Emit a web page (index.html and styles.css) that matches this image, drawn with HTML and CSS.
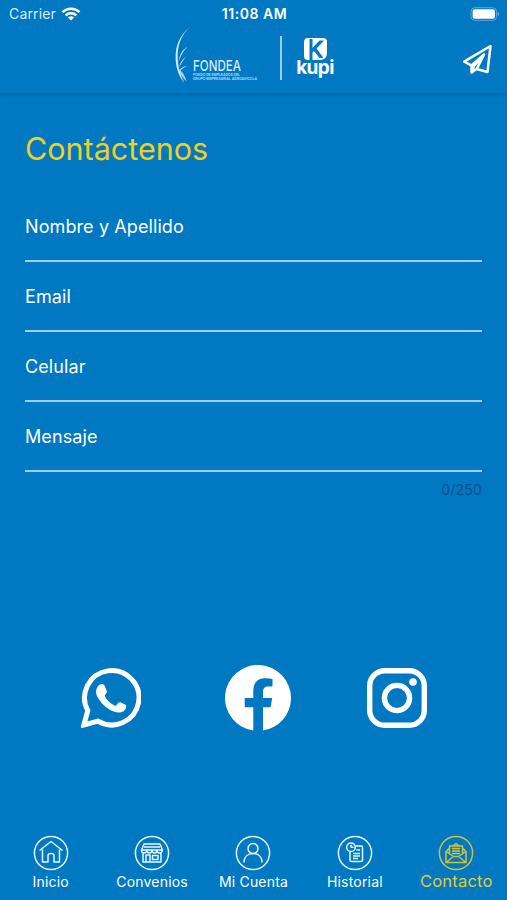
FILE: index.html
```html
<!DOCTYPE html>
<html lang="es">
<head>
  <meta charset="UTF-8">
  <meta name="viewport" content="width=device-width, initial-scale=1.0">
  <title>Contáctenos</title>
  <link rel="stylesheet" href="styles.css">
</head>
<body>
  <header>
    <div class="status-bar">
      <div class="carrier">
        <span>Carrier</span>
        <svg width="20" height="14" viewBox="0 0 20 14" fill="none" stroke="#fff" stroke-width="2.5">
          <path d="M1.5 5.1C6.3.5 13.7.5 18.500 5.100M4.700 8.400C7.700 5.600 12.300 5.600 15.300 8.400"/>
          <path d="M10 13.600L6.900 10.600Q10 8.100 13.100 10.600Z" fill="#fff" stroke="none"/>
        </svg>
      </div>
      <span class="time">11:08 AM</span>
      <svg class="battery" width="30" height="14" viewBox="0 0 30 14">
        <rect x="1" y=".7" width="25.500" height="12.600" rx="3.800" fill="none" stroke="#5fa9da"/>
        <rect x="2.600" y="2.300" width="22.300" height="9.400" rx="2.200" fill="#fff"/>
        <path d="M27.800 4.800Q30.200 7 27.800 9.200Z" fill="#7fbce0"/>
      </svg>
    </div>
    <div class="top-bar">
      <div class="brand">
        <svg class="feather" width="17" height="58" viewBox="0 0 17 58" fill="#d5eafa">
          <path d="M15.500.5C4 10 .5 20 .6 32C.8 42 4 51 9.500 57C5 48 3.200 41 2.700 33C2 20 6 9 15.500.5Z"/>
          <path d="M12.500 20.500C6.500 25 4.500 29 3.700 36C6 28.500 8.500 25 12.500 20.500Z"/>
          <path d="M11.500 30.500C7 33.500 5 37 4.300 41C6.500 36.500 8.500 33.500 11.500 30.500Z"/>
          <path d="M12 40C7.500 40.500 5 42.500 4 46C6.500 43 8.500 41.500 12 40Z"/>
          <path d="M3.500 43C7 45 10 49.500 11.500 55.500C8 52 5 48 3.500 43Z" opacity=".8"/>
        </svg>
        <svg class="fondea" width="66" height="36" viewBox="0 0 66 36">
          <text x="0" y="18.500" textLength="48" lengthAdjust="spacingAndGlyphs" class="fondea-name">FONDEA</text>
          <text x="0" y="23.600" textLength="47" lengthAdjust="spacingAndGlyphs" class="fondea-sub">FONDO DE EMPLEADOS DEL</text>
          <text x="0" y="28" textLength="64" lengthAdjust="spacingAndGlyphs" class="fondea-sub">GRUPO EMPRESARIAL AGROAVÍCOLA</text>
        </svg>
        <span class="divider"></span>
        <div class="kupi">
          <svg width="23" height="22" viewBox="0 0 23 22">
            <path fill="#fff" d="M4 0H19Q23 0 23 4V15Q23 22 16 22H4Q0 22 0 18V4Q0 0 4 0Z"/>
            <path fill="#0079c2" d="M5.500 1H8.500V10L15.500 2.500H20L12.500 10.500L19.500 20H15.500L10 13L8.500 14.500V22H5.500Z"/>
          </svg>
          <span class="kupi-name">kupi</span>
        </div>
      </div>
      <a href="#" class="send" aria-label="Enviar">
        <svg width="32" height="32" viewBox="0 0 32 32" fill="none" stroke="#fff" stroke-width="2.500" stroke-linejoin="round" stroke-linecap="round">
          <path d="M28.500 2L2.200 17.600L9.500 21.500V28.500L14.500 25L25.500 28Z"/>
          <path d="M9.500 21.500L22 10.500L15 24.500M22 10.500L12 22L10 28"/>
        </svg>
      </a>
    </div>
  </header>

  <main>
    <h1>Contáctenos</h1>
    <form>
      <label class="field"><span>Nombre y Apellido</span></label>
      <label class="field"><span>Email</span></label>
      <label class="field"><span>Celular</span></label>
      <label class="field"><span>Mensaje</span></label>
      <p class="counter">0/250</p>
    </form>

    <div class="social">
      <a href="#" aria-label="WhatsApp">
        <svg width="60" height="60" viewBox="0 0 60 60">
          <path d="M2.800 57L6.800 42.600A27.200 27.200 0 1 1 17 53.200Z" fill="none" stroke="#fff" stroke-width="5"/>
          <path fill="#fff" d="M17.500 17.800C19.500 15.200 22.500 15.300 23.600 17.800L25.700 22.800C26.500 25 23.700 26.700 23.800 28C26 32.500 29.500 35.800 34 37.700C35.800 37.700 37.200 33.700 39.200 34.200L44.500 36.800C46 37.800 45 41.500 42.500 43.200C38 46.200 32 43.500 28 41.200C22.500 38 18.500 33 16 28C14.500 24.500 14.800 20.500 17.500 17.800Z"/>
        </svg>
      </a>
      <a href="#" class="facebook" aria-label="Facebook">
        <svg width="66" height="66" viewBox="0 0 66 66">
          <path fill="#fff" d="M66 33A33 33 0 1 0 28.300 65.600V42.300H19.700V33H28.300V26.500C28.300 17.500 32.500 13.300 40.500 13.300Q44 13.300 47.500 14V21.500H43.500C39.500 21.500 38 23.500 38 27V33H47.200L45.600 42.300H38V65.600A33 33 0 0 0 66 33Z"/>
        </svg>
      </a>
      <a href="#" aria-label="Instagram">
        <svg width="60" height="60" viewBox="0 0 60 60" fill="none" stroke="#fff">
          <rect x="2.700" y="2.700" width="54.600" height="54.600" rx="15" stroke-width="5.400"/>
          <circle cx="30" cy="30" r="12.600" stroke-width="5.400"/>
          <circle cx="46" cy="14" r="3.800" fill="#fff" stroke="none"/>
        </svg>
      </a>
    </div>
  </main>

  <nav>
    <a href="#">
      <svg class="tab-icon" viewBox="0 0 36 36">
        <circle cx="18" cy="18" r="16.600"/>
        <path d="M6.500 15.500L18 6.500L29.500 15.500M9.500 14.500V27H15V20.500Q15 18.500 18 18.500T21 20.500V27H26.500V14.500"/>
      </svg>
      <span>Inicio</span>
    </a>
    <a href="#">
      <svg class="tab-icon" viewBox="0 0 36 36">
        <circle cx="18" cy="18" r="16.600"/>
        <path d="M10 9H26L28.500 15H7.500ZM7.500 15Q7.500 18 10 18T13 15Q13 18 15.500 18T18 15Q18 18 20.500 18T23 15Q23 18 25.500 18T28.500 15M9 18V27H27V18M12 27V20H16V27M18.500 20.500H24V24.500H18.500ZM10 12H26"/>
      </svg>
      <span>Convenios</span>
    </a>
    <a href="#">
      <svg class="tab-icon" viewBox="0 0 36 36">
        <circle cx="18" cy="18" r="16.600"/>
        <circle cx="18" cy="13.500" r="5"/>
        <path d="M9 27.500C9 22 12.500 18.500 18 18.500S27 22 27 27.500"/>
      </svg>
      <span>Mi Cuenta</span>
    </a>
    <a href="#">
      <svg class="tab-icon" viewBox="0 0 36 36">
        <circle cx="18" cy="18" r="16.600"/>
        <circle cx="14" cy="12.300" r="4.300"/>
        <path d="M14 9.800V12.300H16.500M18.500 11H24Q25.500 11 25.500 12.500V25Q25.500 26.500 24 26.500H14.500Q13 26.500 13 25V17M19.500 15H23M16 18.500H23M16 21H23M16 23.500H21"/>
      </svg>
      <span>Historial</span>
    </a>
    <a href="#" class="active">
      <svg class="tab-icon" viewBox="0 0 36 36">
        <circle cx="18" cy="18" r="16.600"/>
        <path d="M11.500 19V11H24.500V19M14.500 11L18 8.500L21.500 11M11.500 13L8 16.500V27.500H28V16.500L24.500 13M8 16.500L15.500 21.500H20.500L28 16.500M8 27.500L15.500 21.500M28 27.500L20.500 21.500M14 13.500H22M14 16H22M14 18.500H22"/>
      </svg>
      <span>Contacto</span>
    </a>
  </nav>
</body>
</html>
```

FILE: styles.css
```css
/* Reset margin and padding */
* {
  margin: 0;
  padding: 0;
  box-sizing: border-box;
}

body {
  display: flex;
  flex-direction: column;
  height: 100vh;
  font-family: 'Inter', sans-serif;
  background-color: #0079c2;
  color: #fff;
}

a {
  color: inherit;
  text-decoration: none;
}

svg {
  display: block;
}

/* Header */
header {
  height: 94px;
  border-bottom: 1px solid #006fb5;
  box-shadow: 0 1px 3px rgba(0, 50, 100, 0.25);
}

.status-bar {
  display: grid;
  grid-template-columns: 1fr auto 1fr;
  align-items: center;
  height: 27px;
  padding: 0 7px 0 9px;
  font-size: 14px;
}

.carrier {
  display: flex;
  align-items: center;
  gap: 5px;
  color: #d9edfa;
  letter-spacing: 0.15px;
}

.time {
  font-weight: 600;
  letter-spacing: 0.55px;
}

.battery {
  justify-self: end;
}

.top-bar {
  display: flex;
  justify-content: space-between;
  height: 66px;
  padding: 0 13px 0 175px;
}

.brand {
  display: flex;
}

.feather {
  margin-top: -1px;
}

.fondea {
  margin: 25px 0 0 1px;
  overflow: visible;
}

.fondea-name {
  font-size: 15px;
  font-weight: 500;
  fill: #d5ecfb;
}

.fondea-sub {
  font-size: 3.8px;
  font-weight: 600;
  fill: #b9dcf3;
}

.divider {
  width: 2px;
  height: 44px;
  margin: 9px 14px 0 21px;
  background-color: #9accec;
}

.kupi {
  display: flex;
  flex-direction: column;
  align-items: center;
  width: 38px;
  padding-top: 11px;
}

.kupi-name {
  margin-top: -2px;
  font-size: 19px;
  font-weight: 700;
  line-height: 20px;
  letter-spacing: -0.6px;
}

.send {
  margin-top: 17px;
}

/* Contact form */
main {
  flex: 1;
  padding: 34px 25px 0;
}

h1 {
  color: #f0cf1f;
  font-size: 30.5px;
  font-weight: 400;
  line-height: 42px;
}

form {
  margin-top: 22px;
}

.field {
  display: flex;
  height: 70px;
  padding-top: 23px;
  border-bottom: 2px solid #9dcff0;
  font-size: 18px;
  line-height: 24px;
  letter-spacing: 0.1px;
}

.counter {
  margin-top: 8px;
  color: #08518c;
  font-size: 14px;
  line-height: 20px;
  letter-spacing: 0.2px;
  text-align: right;
}

.social {
  display: flex;
  justify-content: space-between;
  align-items: center;
  margin-top: 165px;
  padding: 0 55px 0 56px;
}

.facebook {
  margin-left: 8px;
}

/* Bottom tabs */
nav {
  display: grid;
  grid-template-columns: repeat(5, 1fr);
  height: 65px;
}

nav a {
  display: flex;
  flex-direction: column;
  align-items: center;
  font-size: 14px;
  line-height: 20px;
  letter-spacing: 0.2px;
  white-space: nowrap;
}

nav a span {
  margin-top: 1px;
}

.tab-icon {
  width: 36px;
  height: 36px;
  fill: none;
  stroke: #e8f6ff;
  stroke-width: 1.5;
  stroke-linejoin: round;
}

.active {
  color: #e3cb30;
  font-size: 16.5px;
}

.active span {
  margin-top: 0;
}

.active .tab-icon {
  stroke: #cfc23c;
}
```
